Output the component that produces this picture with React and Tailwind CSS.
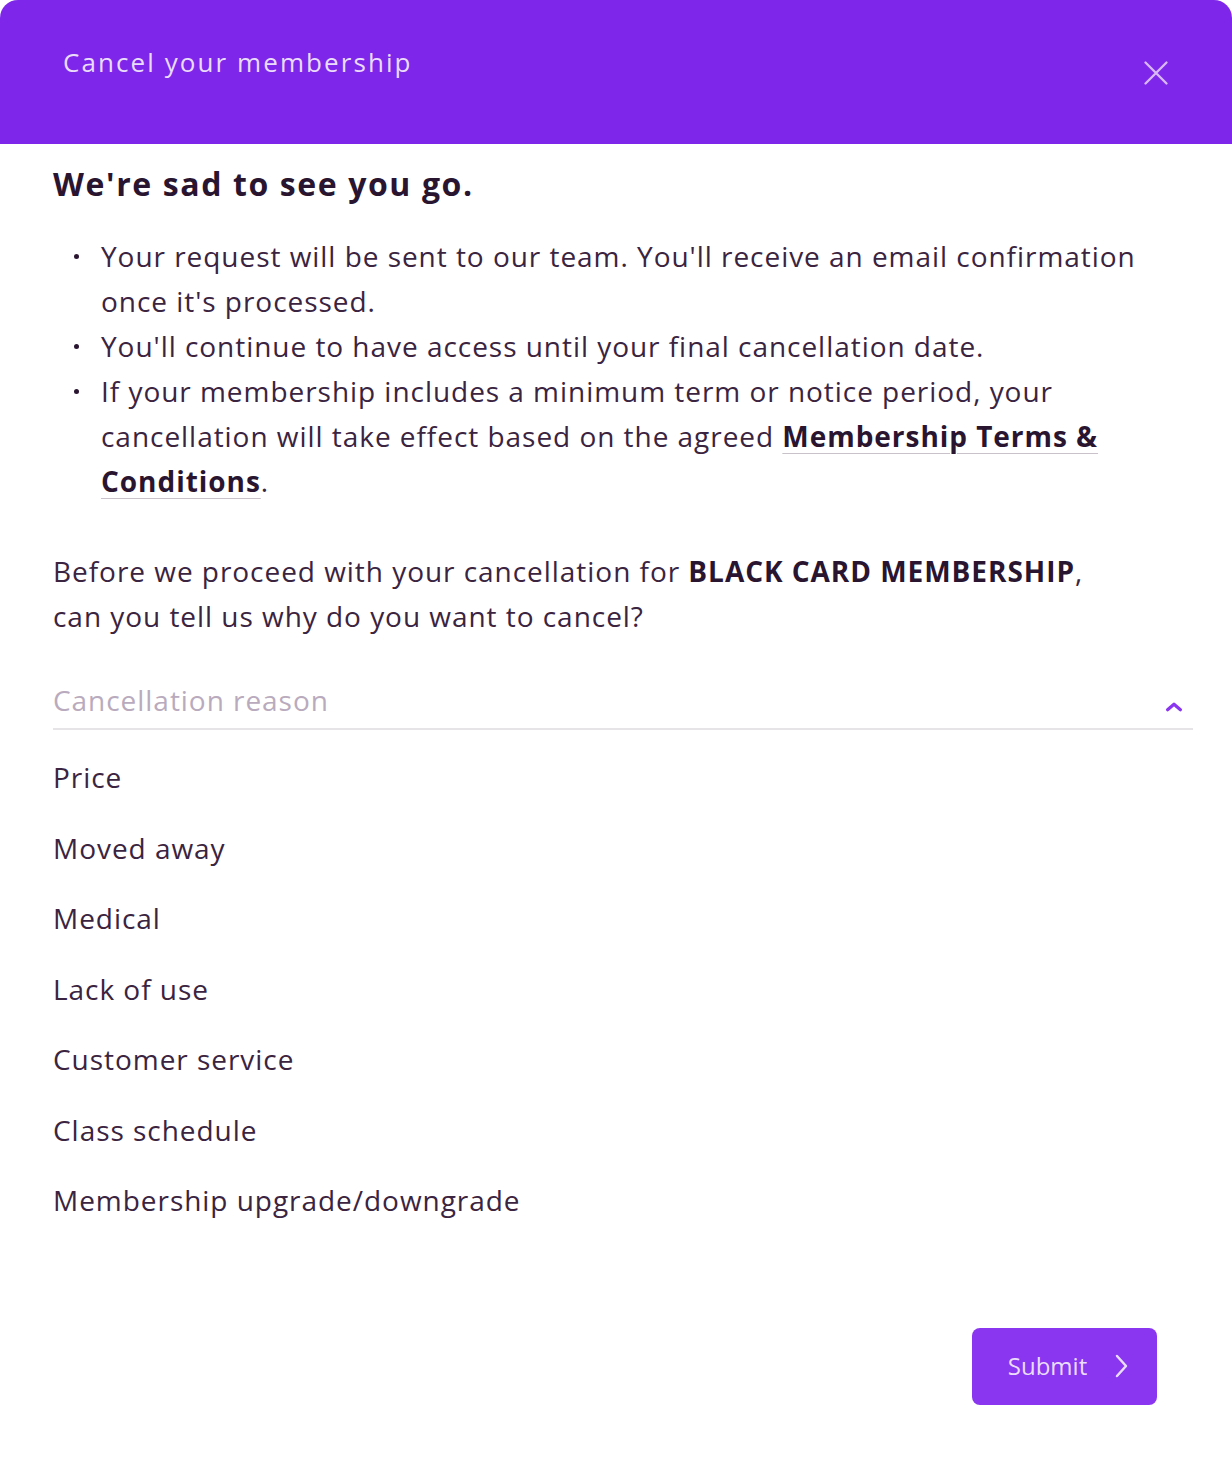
import React, { useState } from 'react';

const reasons = [
  'Price',
  'Moved away',
  'Medical',
  'Lack of use',
  'Customer service',
  'Class schedule',
  'Membership upgrade/downgrade',
];

const Bullet = ({ children }) => (
  <li className="flex">
    <span className="flex h-[45px] w-[48px] shrink-0 items-center pl-[21px]">
      <span className="h-[5px] w-[5px] rounded-full bg-[#2a1530]"></span>
    </span>
    <div>{children}</div>
  </li>
);

const CancelMembership = () => {
  const [reason, setReason] = useState('');

  return (
    <div className="min-h-[1482px] w-[1232px] bg-white font-['Open_Sans',sans-serif] tracking-[0.06em] text-[#3b2440]">
      {/* Header */}
      <div className="flex h-[144px] items-start justify-between rounded-t-[18px] bg-[#7e27ea] pl-[63px] pr-[62px]">
        <h2 className="pt-[42px] text-[26px] leading-[40px] tracking-[0.08em] text-[#eadcfc]">Cancel your membership</h2>
        <button className="mt-[59px] text-[#d9b8f7]">
          <svg className="h-[28px] w-[28px]" viewBox="0 0 24 24" fill="none" stroke="currentColor" strokeWidth={2} strokeLinecap="round">
            <path d="M3 3l18 18M21 3L3 21" />
          </svg>
        </button>
      </div>

      {/* Body */}
      <div className="pl-[53px] pr-[39px]">
        <h1 className="pt-[20px] text-[32px] font-bold leading-[40px] tracking-[0.05em] text-[#2a1530]">We're sad to see you go.</h1>

        <ul className="mt-[30px] text-[28px] leading-[45px]">
          <Bullet>Your request will be sent to our team. You'll receive an email confirmation once it's processed.</Bullet>
          <Bullet>You'll continue to have access until your final cancellation date.</Bullet>
          <Bullet>
            If your membership includes a minimum term or notice period, your cancellation will take effect based on the agreed{' '}
            <a href="#" className="font-bold text-[#2a1530] underline decoration-[#c9c2cb] decoration-1 underline-offset-[6px]">
              Membership Terms &amp; Conditions
            </a>
            .
          </Bullet>
        </ul>

        <p className="mt-[45px] pr-[80px] text-[28px] leading-[45px]">
          Before we proceed with your cancellation for <span className="font-bold text-[#2a1530]">BLACK CARD MEMBERSHIP</span>, can you tell us why do you want to cancel?
        </p>

        {/* Select */}
        <div className="mt-[41px] flex items-end justify-between border-b-2 border-[#e6e4e7] pb-[8px]">
          <span className="text-[28px] leading-[40px] text-[#b9abbd]">{reason || 'Cancellation reason'}</span>
          <svg className="mb-[2px] mr-[8px] h-[22px] w-[22px] text-[#8a35ef]" viewBox="0 0 24 24" fill="none" stroke="currentColor" strokeWidth={3.5} strokeLinecap="round" strokeLinejoin="round">
            <path d="M5 15l7-6 7 6" />
          </svg>
        </div>

        <ul className="pt-[12px]">
          {reasons.map(r => (
            <li
              key={r}
              onClick={() => setReason(r)}
              className="cursor-pointer text-[28px] leading-[70.5px]"
            >
              {r}
            </li>
          ))}
        </ul>

        {/* Footer */}
        <div className="mt-[92px] flex justify-end pr-[36px]">
          <button className="flex h-[77px] w-[185px] items-center justify-center gap-[26px] rounded-[8px] bg-[#8a35ef] pl-[8px] text-[24px] tracking-normal text-[#eadcfc]">
            Submit
            <svg className="h-[26px] w-[16px]" viewBox="0 0 16 26" fill="none" stroke="currentColor" strokeWidth={2.5} strokeLinecap="round" strokeLinejoin="round">
              <path d="M4 3l9 10-9 10" />
            </svg>
          </button>
        </div>
      </div>
    </div>
  );
};

export default function App() {
  return <CancelMembership />;
}
